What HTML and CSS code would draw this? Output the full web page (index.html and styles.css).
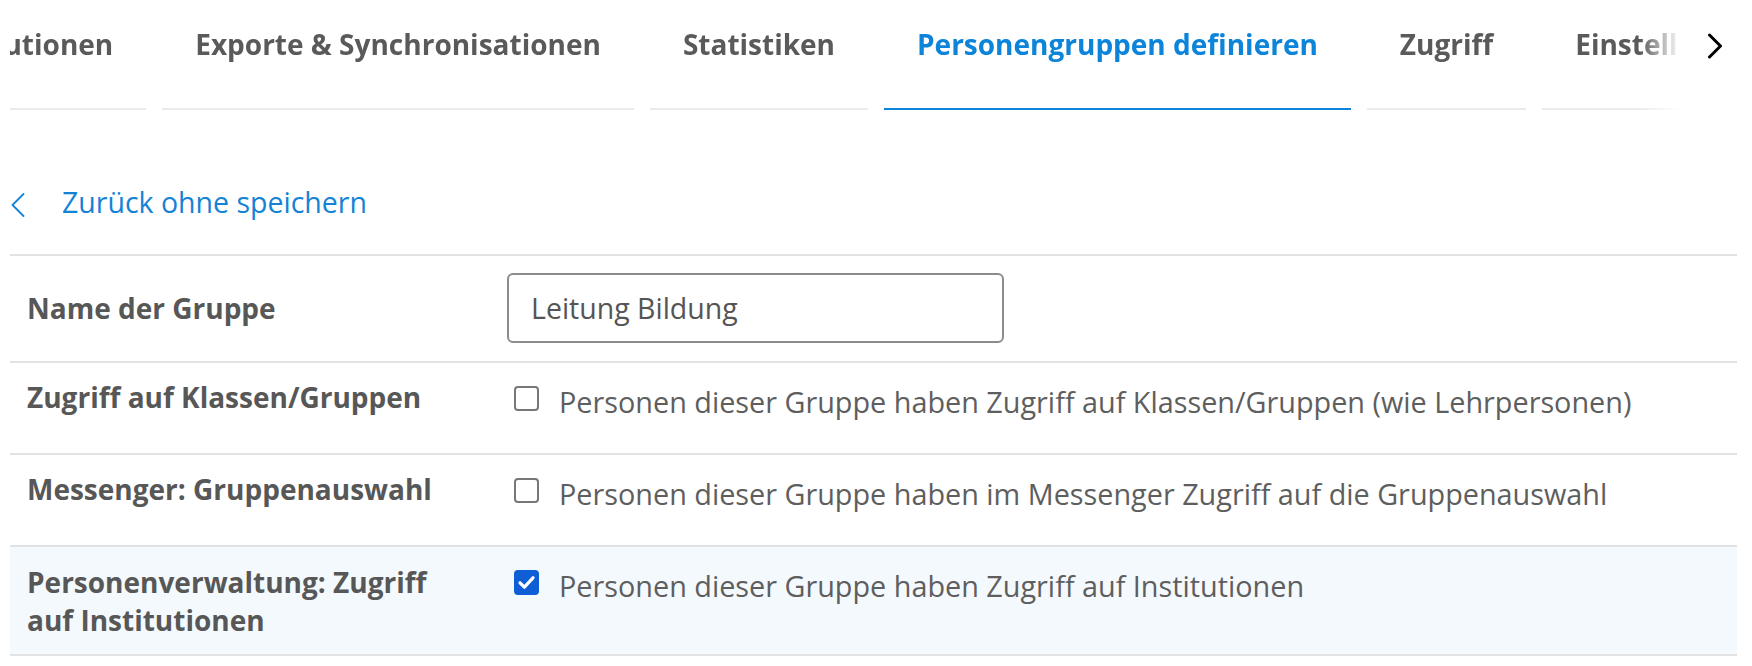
FILE: index.html
```html
<!DOCTYPE html>
<html lang="de">
<head>
<meta charset="utf-8">
<title>Personengruppen definieren</title>
<link rel="stylesheet" href="styles.css">
</head>
<body>
<div class="page">
  <nav class="tabbar">
    <div class="tabs-viewport" id="tabsViewport">
      <div class="tabs">
        <a class="tab" id="firstTab">Institutionen</a>
        <a class="tab">Exporte &amp; Synchronisationen</a>
        <a class="tab">Statistiken</a>
        <a class="tab tab--active">Personengruppen definieren</a>
        <a class="tab">Zugriff</a>
        <a class="tab">Einstellungen</a>
      </div>
    </div>
    <button class="tab-next" type="button" aria-label="Weiter">
      <svg width="16" height="26" viewBox="0 0 16 26"><path d="M2.5 2 L13.5 13 L2.5 24" fill="none" stroke="#000" stroke-width="3" stroke-linecap="round" stroke-linejoin="round"/></svg>
    </button>
  </nav>

  <div class="back">
    <a class="back-link">
      <svg class="back-icon" width="14" height="24" viewBox="0 0 14 24"><path d="M12.5 1 L1.5 12 L12.5 23" fill="none" stroke="#1483d6" stroke-width="1.8" stroke-linecap="round" stroke-linejoin="round"/></svg>
      <span>Zurück ohne speichern</span>
    </a>
  </div>

  <div class="form">
    <div class="row row--input">
      <div class="row-label">Name der Gruppe</div>
      <div class="row-value">
        <div class="text-input">Leitung Bildung</div>
      </div>
    </div>
    <div class="row">
      <div class="row-label">Zugriff auf Klassen/Gruppen</div>
      <div class="row-value">
        <label class="check">
          <span class="box"></span>
          <span class="check-text">Personen dieser Gruppe haben Zugriff auf Klassen/Gruppen (wie Lehrpersonen)</span>
        </label>
      </div>
    </div>
    <div class="row">
      <div class="row-label">Messenger: Gruppenauswahl</div>
      <div class="row-value">
        <label class="check">
          <span class="box"></span>
          <span class="check-text">Personen dieser Gruppe haben im Messenger Zugriff auf die Gruppenauswahl</span>
        </label>
      </div>
    </div>
    <div class="row row--highlight">
      <div class="row-label">Personenverwaltung: Zugriff auf Institutionen</div>
      <div class="row-value">
        <label class="check">
          <span class="box box--checked"><svg width="25" height="25" viewBox="0 0 25 25"><path d="M6 12.8 L10.4 17.2 L19 7.8" fill="none" stroke="#fff" stroke-width="3.2" stroke-linecap="round" stroke-linejoin="round"/></svg></span>
          <span class="check-text">Personen dieser Gruppe haben Zugriff auf Institutionen</span>
        </label>
      </div>
    </div>
  </div>
</div>
<script src="app.js"></script>
</body>
</html>
```
FILE: styles.css
```css
html, body {
  margin: 0;
  padding: 0;
  background: #fff;
}
body {
  font-family: "Open Sans", "Noto Sans", sans-serif;
  color: #595959;
}
.page {
  padding: 0 15px 0 10px;
}

/* Tabs */
.tabbar {
  display: flex;
  align-items: flex-start;
}
.tabs-viewport {
  flex: 1;
  min-width: 0;
  overflow: hidden;
  -webkit-mask-image: linear-gradient(to right, #000 calc(100% - 40px), transparent 100%);
  mask-image: linear-gradient(to right, #000 calc(100% - 40px), transparent 100%);
}
.tabs {
  display: flex;
  gap: 16px;
  width: max-content;
}
.tab {
  display: block;
  white-space: nowrap;
  padding: 26px 33px 45px;
  font-size: 28px;
  font-weight: 700;
  line-height: 37px;
  color: #5a5a5a;
  border-bottom: 2px solid #ebebeb;
}
.tab--active {
  color: #0b84d9;
  border-bottom-color: #0b84d9;
}
.tab-next {
  width: 57px;
  flex: none;
  border: 0;
  background: transparent;
  padding: 33px 0 0 12px;
  display: flex;
  justify-content: center;
}

/* Back link */
.back {
  padding: 74px 0 33px;
}
.back-link {
  display: flex;
  align-items: center;
  gap: 37px;
  font-size: 28.5px;
  line-height: 37px;
  color: #1483d6;
}
.back-icon {
  margin-top: 5px;
  margin-left: 1px;
}

/* Form rows */
.form {
  border-top: 2px solid #e2e2e2;
}
.row {
  display: grid;
  grid-template-columns: 480px 1fr;
  padding: 16px 0 17px 17px;
  border-bottom: 2px solid #e2e2e2;
}
.row--input {
  padding-top: 17px;
  padding-bottom: 18px;
  align-items: center;
}
.row--highlight {
  padding-bottom: 15px;
  background: #f4f9fd;
}
.row-label {
  font-size: 28px;
  font-weight: 700;
  line-height: 37px;
  color: #575757;
  padding-right: 40px;
}
.row--highlight .row-label {
  line-height: 38px;
}
.row-value {
  min-height: 57px;
}
.row--input .row-value {
  min-height: 0;
}
.text-input {
  box-sizing: border-box;
  width: 497px;
  height: 70px;
  border: 2px solid #8c8c8c;
  border-radius: 6px;
  padding: 0 22px;
  display: flex;
  align-items: center;
  font-size: 28.5px;
  color: #555;
  background: #fff;
}
.check {
  display: flex;
  align-items: flex-start;
  gap: 20px;
  padding: 4px 0 0 7px;
}
.box {
  box-sizing: border-box;
  flex: none;
  width: 25px;
  height: 25px;
  margin-top: 3px;
  border: 2px solid #777;
  border-radius: 4px;
  background: #fff;
}
.box--checked {
  border: 0;
  background: #0e5fd6;
  display: block;
}
.box--checked svg {
  display: block;
}
.check-text {
  font-size: 28.8px;
  line-height: 37px;
  color: #5e5e5e;
}
```
FILE: app.js
```js
(function () {
  var vp = document.getElementById('tabsViewport');
  var first = document.getElementById('firstTab');
  vp.scrollLeft = first.offsetWidth - 136;
})();
```
